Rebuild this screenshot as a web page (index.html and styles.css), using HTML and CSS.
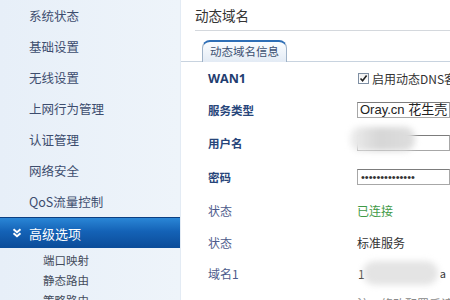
FILE: index.html
```html
<!DOCTYPE html>
<html lang="zh-CN">
<head>
<meta charset="utf-8">
<title>动态域名</title>
<link rel="stylesheet" href="styles.css">
</head>
<body>
<div class="app">
  <nav class="sidebar">
    <div class="menu-item">系统状态</div>
    <div class="menu-item">基础设置</div>
    <div class="menu-item">无线设置</div>
    <div class="menu-item">上网行为管理</div>
    <div class="menu-item">认证管理</div>
    <div class="menu-item">网络安全</div>
    <div class="menu-item">QoS流量控制</div>
    <div class="menu-item active">
      <svg class="chev" width="10" height="10" viewBox="0 0 10 10"><path d="M1.5 1.2 L5 4.2 L8.5 1.2 M1.5 5.2 L5 8.2 L8.5 5.2" fill="none" stroke="#fff" stroke-width="2"/></svg>
      <span>高级选项</span>
    </div>
    <div class="submenu">
      <div class="sub-item">端口映射</div>
      <div class="sub-item">静态路由</div>
      <div class="sub-item">策略路由</div>
    </div>
  </nav>
  <main class="content">
    <div class="title-row"><span>动态域名</span></div>
    <div class="tabs"><div class="tab">动态域名信息</div></div>
    <div class="form">
      <div class="label strong latin">WAN1</div>
      <div class="value"><span class="check"><svg width="9" height="9" viewBox="0 0 9 9"><path d="M1.5 4.5 L3.6 6.8 L7.6 1.6" fill="none" stroke="#222" stroke-width="1.6"/></svg></span><span class="dark">启用动态DNS客户端</span></div>

      <div class="label strong">服务类型</div>
      <div class="value"><div class="box select">Oray.cn 花生壳 DDNS</div></div>

      <div class="label strong">用户名</div>
      <div class="value redacted"><div class="box"></div><div class="blob user-blob"></div></div>

      <div class="label strong">密码</div>
      <div class="value"><div class="box pwd">••••••••••••••</div></div>

      <div class="label">状态</div>
      <div class="value green">已连接</div>

      <div class="label">状态</div>
      <div class="value dark">标准服务</div>

      <div class="label">域名1</div>
      <div class="value redacted dark"><span class="d1">1</span><span class="blob dom-blob"></span><span class="da">a</span></div>

      <div class="label"></div>
      <div class="value grey">注：修改配置后请重新连接</div>
    </div>
  </main>
</div>
</body>
</html>
```
FILE: styles.css
```css
* { box-sizing: border-box; }
html, body { margin: 0; padding: 0; }
body {
  width: 450px;
  height: 300px;
  overflow: hidden;
  background: #fff;
  font-family: "Noto Sans CJK SC", "Liberation Sans", sans-serif;
}
.app {
  display: flex;
  height: 300px;
  overflow: hidden;
}
.sidebar {
  width: 181px;
  flex: none;
  background: linear-gradient(90deg, #e7eff8 0%, #eef4fa 100%);
  border-right: 1px solid #e3ebf4;
}
.menu-item {
  height: 31px;
  line-height: 31px;
  padding-left: 29px;
  font-size: 12.5px;
  color: #3d4d6e;
}
.menu-item.active {
  display: flex;
  align-items: center;
  height: 31px;
  padding-left: 12px;
  color: #fff;
  font-size: 13px;
  border-top: 1px solid #0b3f82;
  background: linear-gradient(180deg, #2a86d6 0%, #1462b6 45%, #0b4c99 100%);
}
.menu-item.active .chev { margin-right: 7px; }
.submenu { padding-top: 2px; }
.sub-item {
  height: 20px;
  line-height: 20px;
  padding-left: 43px;
  font-size: 11.5px;
  color: #444c5c;
}
.content {
  flex: 1;
  min-width: 0;
  overflow: hidden;
}
.title-row {
  height: 31px;
  margin-left: 14px;
  border-bottom: 1px solid #d4d8dd;
  line-height: 30px;
  font-size: 13.5px;
  color: #333;
}
.tabs {
  margin-top: 9px;
  padding-left: 21px;
  border-bottom: 1px solid #c8d3df;
  height: 22px;
}
.tab {
  width: 85px;
  height: 22px;
  border: 1px solid #9fb2c7;
  border-top: 2px solid #2f6fb6;
  border-bottom: none;
  border-radius: 8px 8px 0 0;
  background: linear-gradient(180deg, #fbfdff 0%, #e3ebf5 100%);
  text-align: center;
  font-size: 11.5px;
  line-height: 19px;
  color: #3b4f70;
}
.form {
  display: grid;
  grid-template-columns: 149px 1fr;
  grid-template-rows: 32px 32px 34px 34px 33px 31px 30px 30px;
  margin-left: 27px;
  font-size: 12px;
}
.label {
  display: flex;
  align-items: center;
  color: #4d5b8c;
}
.label.strong {
  color: #27457a;
  font-weight: bold;
  font-size: 11.5px;
}
.label.latin {
  font-family: "Open Sans", "Liberation Sans", sans-serif;
  font-size: 12.5px;
  color: #1f3d70;
}
.value {
  display: flex;
  align-items: center;
  white-space: nowrap;
  min-width: 0;
  overflow: visible;
}
.dark { color: #333; }
.green { color: #3f9a47; }
.grey { color: #888; }
.check {
  width: 11px;
  height: 11px;
  border: 1px solid #7f8fa3;
  background: linear-gradient(#f2f2f2, #fff);
  display: inline-flex;
  align-items: center;
  justify-content: center;
  margin-left: 1px;
  margin-right: 3px;
}
.box {
  width: 120px;
  height: 16px;
  border: 1px solid #a7a7a7;
  border-top-color: #7c7c7c;
  background: #fff;
}
.select {
  height: 16px;
  padding-left: 2px;
  font-family: "Liberation Sans", "Noto Sans CJK SC", sans-serif;
  font-size: 13px;
  line-height: 14px;
  color: #222;
  overflow: hidden;
}
.pwd {
  padding-left: 3px;
  font-family: "Liberation Sans", sans-serif;
  font-size: 11px;
  line-height: 14px;
  color: #333;
}
.redacted { position: relative; }
.blob {
  position: absolute;
  background: #dcdcdc;
  filter: blur(3px);
}
.user-blob {
  left: -7px;
  top: 1px;
  width: 65px;
  height: 24px;
  border-radius: 10px;
  background: linear-gradient(90deg, #eeeeee 0%, #d6d6d6 45%, #dedede 100%);
}
.dom-blob {
  left: 6px;
  top: 3px;
  width: 75px;
  height: 24px;
  border-radius: 12px;
  background: #e4e4e4;
}
.d1 { margin-left: 1px; }
.da { margin-left: 75px; font-size: 11px; }
```
